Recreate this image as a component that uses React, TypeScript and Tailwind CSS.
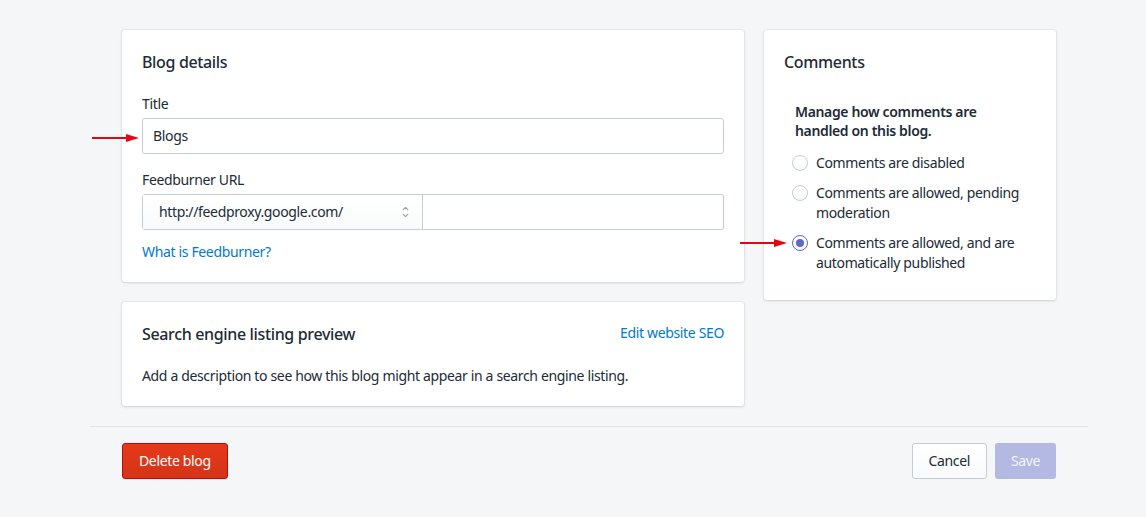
import { ChevronDown, ChevronUp } from "lucide-react";

const font = "font-['Noto_Sans',_'Open_Sans',_sans-serif] tracking-[-0.35px]";

function Card({ className = "", children }: { className?: string; children: React.ReactNode }) {
  return (
    <div
      className={`rounded-[3px] bg-white p-5 shadow-[0_0_0_1px_rgba(63,63,68,0.05),0_1px_3px_0_rgba(63,63,68,0.15)] ${className}`}
    >
      {children}
    </div>
  );
}

function Radio({ checked, children }: { checked?: boolean; children: React.ReactNode }) {
  return (
    <label className="flex items-start gap-2">
      <span
        className={`mt-[2px] flex h-4 w-4 shrink-0 items-center justify-center rounded-full border bg-gradient-to-b from-white to-[#f9fafb] ${
          checked ? "border-[#5c6ac4]" : "border-[#c4cdd5]"
        }`}
      >
        {checked && <span className="h-2 w-2 rounded-full bg-[#5c6ac4]" />}
      </span>
      <span className="text-sm leading-5">{children}</span>
    </label>
  );
}

function Arrow({ className }: { className: string }) {
  return (
    <svg className={`pointer-events-none absolute ${className}`} width="48" height="10" viewBox="0 0 48 10">
      <line x1="0" y1="5" x2="36" y2="5" stroke="#e30613" strokeWidth="2" />
      <polygon points="34,1 47,5 34,9" fill="#e30613" />
    </svg>
  );
}

export default function App() {
  return (
    <div className={`relative min-h-[517px] bg-[#f4f6f8] text-[#212b36] ${font}`}>
      <div className="ml-[90px] w-[998px] pt-[30px]">
        <div className="flex items-start gap-5 px-8">
          {/* Left column */}
          <div className="flex w-[622px] flex-col gap-5">
            <Card>
              <h2 className="text-base font-medium leading-6">Blog details</h2>
              <div className="mt-5">
                <p className="text-sm leading-5">Title</p>
                <div className="mt-1 flex h-9 items-center rounded-[3px] border border-[#c4cdd5] px-[10px] text-sm">
                  Blogs
                </div>
              </div>
              <div className="mt-4">
                <p className="text-sm leading-5">Feedburner URL</p>
                <div className="mt-1 flex h-9 rounded-[3px] border border-[#c4cdd5]">
                  <div className="flex w-[280px] items-center justify-between border-r border-[#c4cdd5] bg-gradient-to-b from-white to-[#f9fafb] pl-4 pr-3 text-sm">
                    <span>http://feedproxy.google.com/</span>
                    <span className="flex flex-col items-center text-[#919eab]">
                      <ChevronUp size={9} strokeWidth={3} className="-mb-[2px]" />
                      <ChevronDown size={9} strokeWidth={3} />
                    </span>
                  </div>
                  <div className="flex-1" />
                </div>
              </div>
              <a className="mt-3 block text-sm leading-5 text-[#007ace]">What is Feedburner?</a>
            </Card>

            <Card>
              <div className="flex items-center justify-between">
                <h2 className="text-base font-medium leading-6">Search engine listing preview</h2>
                <a className="-mt-[3px] text-sm leading-5 text-[#007ace]">Edit website SEO</a>
              </div>
              <p className="mt-5 text-sm leading-5">
                Add a description to see how this blog might appear in a search engine listing.
              </p>
            </Card>
          </div>

          {/* Right column */}
          <Card className="w-[292px] pb-[27px]">
            <h2 className="text-base font-medium leading-6">Comments</h2>
            <p className="mt-7 w-[200px] pl-[11px] text-sm font-semibold leading-[19px]">
              Manage how comments are handled on this blog.
            </p>
            <div className="mt-[13px] flex flex-col gap-[10px] pl-2">
              <Radio>Comments are disabled</Radio>
              <Radio>Comments are allowed, pending moderation</Radio>
              <Radio checked>Comments are allowed, and are automatically published</Radio>
            </div>
          </Card>
        </div>

        <div className="mt-5 border-t border-[#dfe3e8]" />

        <div className="flex items-center justify-between px-8 pt-4">
          <button className="h-9 rounded-[3px] border border-[#bf0711] bg-gradient-to-b from-[#e6391a] to-[#d53417] px-4 text-sm text-white shadow-[0_1px_0_0_rgba(22,29,37,0.05)]">
            Delete blog
          </button>
          <div className="flex gap-2">
            <button className="h-9 rounded-[3px] border border-[#c4cdd5] bg-gradient-to-b from-white to-[#f9fafb] px-4 text-sm text-[#212b36]">
              Cancel
            </button>
            <button className="h-9 w-[61px] rounded-[3px] bg-[#b3b9e2] text-sm text-[#f4f5fa]">Save</button>
          </div>
        </div>
      </div>

      <Arrow className="left-[92px] top-[133px]" />
      <Arrow className="left-[740px] top-[238px]" />
    </div>
  );
}
